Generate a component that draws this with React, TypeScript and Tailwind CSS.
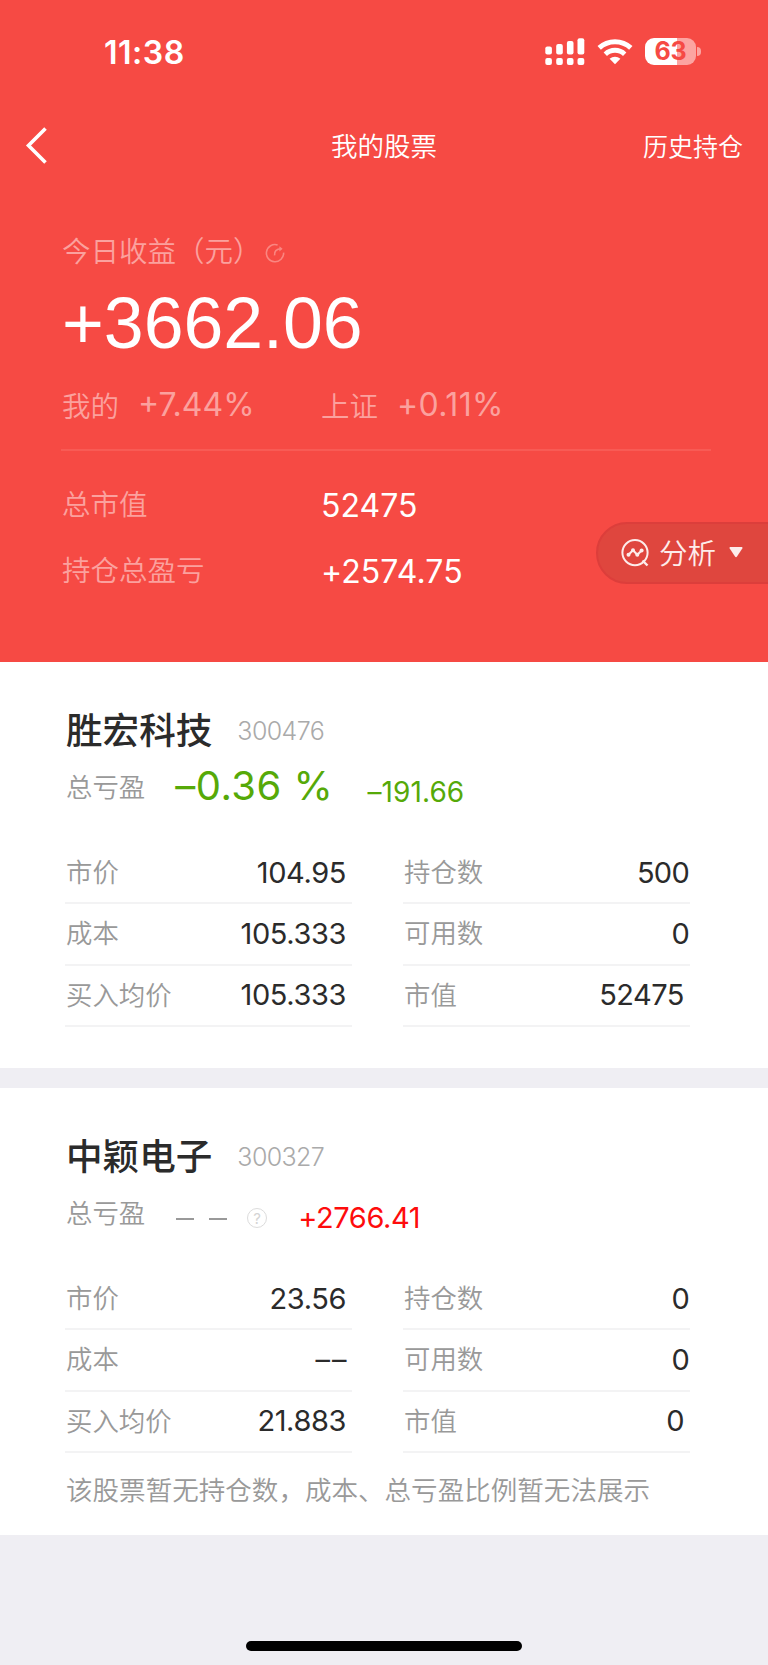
interface Cell {
  label: string;
  value: string;
  inset?: boolean;
}

interface Holding {
  name: string;
  code: string;
  rows: [Cell, Cell][];
}

const SHENGHONG: Holding = {
  name: "胜宏科技",
  code: "300476",
  rows: [
    [{ label: "市价", value: "104.95" }, { label: "持仓数", value: "500" }],
    [{ label: "成本", value: "105.333" }, { label: "可用数", value: "0" }],
    [{ label: "买入均价", value: "105.333" }, { label: "市值", value: "52475", inset: true }],
  ],
};

const ZHONGYING: Holding = {
  name: "中颖电子",
  code: "300327",
  rows: [
    [{ label: "市价", value: "23.56" }, { label: "持仓数", value: "0" }],
    [{ label: "成本", value: "–\u200a–" }, { label: "可用数", value: "0" }],
    [{ label: "买入均价", value: "21.883" }, { label: "市值", value: "0", inset: true }],
  ],
};

function SignalIcon() {
  return (
    <svg width="40" height="28" viewBox="0 0 40 28" fill="currentColor">
      <rect x="0.3" y="8.5" width="6.6" height="8" rx="2" />
      <rect x="11.2" y="6" width="6.6" height="10.5" rx="2" />
      <rect x="21.9" y="3" width="6.6" height="13.5" rx="2" />
      <rect x="32.5" y="0.2" width="6.8" height="16.3" rx="2" />
      <rect x="0.3" y="20" width="6.6" height="7" rx="2" />
      <rect x="11.2" y="20" width="6.6" height="7" rx="2" />
      <rect x="21.9" y="20" width="6.6" height="7" rx="2" />
      <rect x="32.5" y="20" width="6.8" height="7" rx="2" />
    </svg>
  );
}

function WifiIcon() {
  return (
    <svg width="36" height="26" viewBox="0 0 36 26" fill="none" stroke="currentColor" strokeWidth="4.9">
      <path d="M2.2 8.9C11 0.6 25 0.6 33.8 8.9" />
      <path d="M8.3 15.2C13.8 10 22.2 10 27.7 15.2" />
      <path d="M12.6 19.8C15.7 16.9 20.3 16.9 23.4 19.8L18 25.2Z" fill="currentColor" stroke="none" />
    </svg>
  );
}

function Battery() {
  return (
    <div className="flex items-center gap-[1px]">
      <div className="flex h-[27px] w-[51px] items-center justify-center rounded-[9px] bg-linear-to-r from-white from-63% to-[#fca4a1] to-63%">
        <span className="text-[25px] leading-none font-bold tracking-[-0.3px] text-[#f64a44]">63</span>
      </div>
      <div className="h-[9px] w-[4px] rounded-r-full bg-[#fca4a1]" />
    </div>
  );
}

function AnalysisIcon() {
  return (
    <svg width="28" height="28" viewBox="0 0 28 28" fill="none" stroke="currentColor" strokeWidth="2">
      <circle cx="14" cy="13.6" r="12.6" />
      <path d="M21.5 21.5L26.5 26.5" strokeWidth="2.4" />
      <path d="M7.5 15.8L12 11.3L16.3 15.8L20.6 11.5" />
      <g fill="currentColor" stroke="none">
        <circle cx="7.5" cy="15.8" r="2" />
        <circle cx="12" cy="11.3" r="2" />
        <circle cx="16.3" cy="15.8" r="2" />
        <circle cx="20.6" cy="11.5" r="2" />
      </g>
    </svg>
  );
}

function Header() {
  return (
    <header className="relative h-[662px] bg-[#f64a44] text-white">
      <div className="flex h-[103px] justify-between pr-[67px] pl-[104px]">
        <span className="mt-[33px] text-[32px] leading-[40px] font-semibold tracking-[0.5px]">11:38</span>
        <div className="mt-[38px] flex h-[28px] items-start">
          <SignalIcon />
          <div className="mt-px ml-[12px]">
            <WifiIcon />
          </div>
          <div className="ml-[12px]">
            <Battery />
          </div>
        </div>
      </div>

      <nav className="grid h-[84px] grid-cols-3 items-center font-[350]">
        <svg className="ml-[24px]" width="24" height="38" viewBox="0 0 24 38" fill="none" stroke="currentColor" strokeWidth="3.6">
          <path d="M21.5 2.5L4.5 19.5L21.5 36.5" />
        </svg>
        <span className="text-center font-['Noto_Sans_CJK_SC',sans-serif] text-[26.5px] leading-[36px]">我的股票</span>
        <span className="pr-[25px] text-right font-['Noto_Sans_CJK_SC',sans-serif] text-[25px] leading-[36px]">历史持仓</span>
      </nav>

      <div className="px-[62px]">
        <div className="mt-[43px] flex h-[40px] items-center text-[#fba19e]">
          <span className="font-['Noto_Sans_CJK_SC',sans-serif] text-[28.5px] leading-[40px] font-[350]">今日收益（元）</span>
          <svg className="mt-[5px] ml-[3px]" width="20" height="20" viewBox="0 0 20 20" fill="none" stroke="#fa8681" strokeWidth="1.6">
            <path d="M12.6 1.9A8.6 8.6 0 1 0 18.6 9.6" />
            <path d="M9.6 12.4C9.2 8.2 11 6 16.5 5.8" />
            <path d="M14.4 3.2L17.6 5.8L14.4 8.4Z" fill="#fa8681" stroke="none" />
          </svg>
        </div>
        <div className="mt-[13px] font-['Liberation_Sans',sans-serif] text-[71.6px] leading-[80px]">+3662.06</div>
        <div className="mt-[18px] flex h-[48px] items-center text-[28.5px] text-[#fba19e]">
          <div className="flex w-[259px] items-center">
            <span className="font-['Noto_Sans_CJK_SC',sans-serif] font-[350]">我的</span>
            <span className="ml-[19px] text-[32px]">+7.44%</span>
          </div>
          <span className="font-['Noto_Sans_CJK_SC',sans-serif] font-[350]">上证</span>
          <span className="ml-[19px] text-[32px] tracking-[0.4px]">+0.11%</span>
        </div>
        <div className="mt-[20px] -ml-px h-[2px] w-[650px] bg-[#f85b55]" />
        <div className="mt-[20px] flex h-[66px] items-center">
          <span className="w-[259px] pb-px font-['Noto_Sans_CJK_SC',sans-serif] text-[28.5px] font-[350] text-[#fba19e]">总市值</span>
          <span className="pt-[4px] text-[32px]">52475</span>
        </div>
        <div className="flex h-[66px] items-center">
          <span className="w-[259px] pb-px font-['Noto_Sans_CJK_SC',sans-serif] text-[28.5px] font-[350] text-[#fba19e]">持仓总盈亏</span>
          <span className="pt-[4px] text-[32px] tracking-[0.1px]">+2574.75</span>
        </div>
      </div>

      <button className="absolute top-[522px] right-[-2px] flex h-[62px] w-[174px] items-center rounded-l-full border-2 border-[#dc3e3b] bg-[#df463e] pb-px pl-[23px] text-[#fdeceb]">
        <AnalysisIcon />
        <span className="ml-[10px] pb-px font-['Noto_Sans_CJK_SC',sans-serif] text-[28.5px] leading-none font-[350]">分析</span>
        <svg className="ml-[13px]" width="14" height="11" viewBox="0 0 14 11" fill="currentColor">
          <path d="M1.2 0H12.8Q14 0.3 13.3 1.5L8 9.6Q7 10.8 6 9.6L0.7 1.5Q0 0.3 1.2 0Z" />
        </svg>
      </button>
    </header>
  );
}

function Title({ name, code }: { name: string; code: string }) {
  return (
    <div className="flex h-[54px] items-center">
      <span className="font-['Noto_Sans_CJK_SC',sans-serif] text-[36.6px] leading-[54px] font-medium text-[#2b2b2b]">{name}</span>
      <span className="mt-[5px] ml-[25px] text-[25px] font-light tracking-[-0.6px] text-[#aaa]">{code}</span>
    </div>
  );
}

function Stats({ rows }: { rows: [Cell, Cell][] }) {
  return (
    <div className="-ml-px grid w-[625px] grid-cols-2 gap-x-[51px]">
      {rows.flat().map((cell, i) => (
        <div key={cell.label} className="flex h-[61.3px] items-center justify-between border-b-2 border-[#f3f3f4] pl-px">
          <span className="pb-[3px] font-['Noto_Sans_CJK_SC',sans-serif] text-[26.4px] leading-[40px] font-[350] text-[#999]">{cell.label}</span>
          <span
            className={`text-[29px] leading-[40px] text-[#2b2b2b] ${
              i % 2 === 0 ? "pr-[6px] tracking-[-0.4px]" : cell.inset ? "pr-[6px] tracking-[-0.5px]" : "pr-[1px] tracking-[-0.7px]"
            }`}
          >
            {cell.value}
          </span>
        </div>
      ))}
    </div>
  );
}

export default function App() {
  return (
    <div className="flex h-[1665px] w-[768px] flex-col overflow-hidden bg-[#efeef3] font-['Inter',sans-serif]">
      <Header />

      <section className="h-[406px] bg-white pt-[40px] pl-[66px]">
        <Title {...SHENGHONG} />
        <div className="flex h-[60px] items-center">
          <span className="font-['Noto_Sans_CJK_SC',sans-serif] text-[26.4px] font-[350] text-[#999]">总亏盈</span>
          <span className="ml-[30px] text-[40px] tracking-[0.5px] text-[#56a908]">–0.36 %</span>
          <span className="mt-[11px] ml-[34px] text-[28px] tracking-[0.1px] text-[#56a908]">–191.66</span>
        </div>
        <div className="mt-[27px]">
          <Stats rows={SHENGHONG.rows} />
        </div>
      </section>

      <section className="mt-[20px] h-[447px] bg-white pt-[40px] pl-[66px]">
        <Title {...ZHONGYING} />
        <div className="flex h-[60px] items-center">
          <span className="font-['Noto_Sans_CJK_SC',sans-serif] text-[26.4px] font-[350] text-[#999]">总亏盈</span>
          <div className="mt-[14px] ml-[31px] flex gap-[15px]">
            <div className="h-[2px] w-[18px] bg-[#999]" />
            <div className="h-[2px] w-[18px] bg-[#999]" />
          </div>
          <div className="mt-[12px] ml-[20px] flex size-[20px] items-center justify-center rounded-full border-[1.5px] border-[#dcdcdc] text-[15px] leading-none text-[#d4d4d4]">?</div>
          <span className="mt-[12px] ml-[31px] text-[29px] tracking-[-0.4px] text-[#fe0c0c]">+2766.41</span>
        </div>
        <div className="mt-[27px]">
          <Stats rows={ZHONGYING.rows} />
        </div>
        <p className="mt-[16px] font-['Noto_Sans_CJK_SC',sans-serif] text-[26.55px] leading-[40px] font-[350] text-[#999]">
          该股票暂无持仓数，成本、总亏盈比例暂无法展示
        </p>
      </section>

      <div className="mt-auto mb-[14px] ml-[246px] h-[10px] w-[276px] rounded-full bg-black" />
    </div>
  );
}
